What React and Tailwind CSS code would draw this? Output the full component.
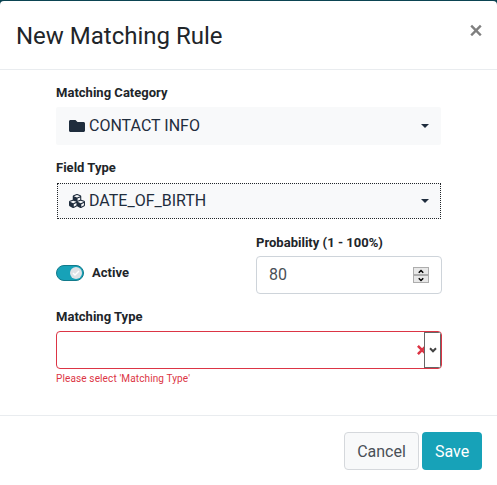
import React from 'react';
import { FaFolder, FaCubes } from 'react-icons/fa';

function Label({ children }) {
  return <div className="h-5 whitespace-nowrap text-[13px] leading-5 font-bold tracking-[0.02px] text-[#212529]">{children}</div>;
}

function Caret() {
  return <span className="ml-auto border-x-[4px] border-t-[4px] border-x-transparent border-t-[#1f2d3d]" />;
}

function Chevron({ up = false, className }) {
  return (
    <svg viewBox="0 0 8 6" className={className} fill="none" stroke="currentColor" strokeWidth="2">
      <path d={up ? 'M1 4.7 4 1.7l3 3' : 'M1 1.3l3 3 3-3'} />
    </svg>
  );
}

export default function App() {
  return (
    <div className="h-[485px] w-[497px] overflow-hidden bg-[#0b4452] pt-px font-['Roboto',sans-serif] text-[#212529]">
      <div className="flex h-[484px] flex-col rounded-t-[4px] bg-white">
        <header className="flex h-[69px] shrink-0 items-start justify-between border-b border-[#e9ecef] pr-[15px] pl-4">
          <h1 className="mt-[17px] text-2xl leading-9 font-normal">New Matching Rule</h1>
          <button aria-label="Close" className="mt-[23px] text-[#7f7f7f]">
            <svg viewBox="0 0 12 12" className="h-3 w-3" fill="none" stroke="currentColor" strokeWidth="2.4">
              <path d="M1.2 1.7l9.6 9.6M10.8 1.7 1.2 11.3" />
            </svg>
          </button>
        </header>

        <main className="h-[345px] shrink-0 pt-[13px] pr-[55px] pl-14">
          <Label>Matching Category</Label>
          <button className="mt-1 flex h-[38px] w-[385px] items-center rounded-[2px] bg-[#f8f9fa] pr-3 pl-[13px] text-base text-[#1f2d3d]">
            <FaFolder className="mr-1 h-4 w-4" />
            CONTACT INFO
            <Caret />
          </button>

          <div className="mt-[13px]">
            <Label>Field Type</Label>
          </div>
          <button className="mt-[5px] ml-px flex h-9 w-[384px] items-center border border-dotted border-[#212529] bg-[#f8f9fa] pr-[11px] pb-px pl-[11px] text-base text-[#1f2d3d]">
            <FaCubes className="mr-1 h-4 w-4" />
            DATE_OF_BIRTH
            <Caret />
          </button>

          <div className="mt-[14px] flex">
            <div className="flex h-[61px] w-[200px] items-start pt-[30px]">
              <span className="mt-[2px] flex h-4 w-7 items-center justify-end rounded-full border border-[#117a8b] bg-[#17a2b8] pr-px">
                <span className="flex h-3 w-3 items-center justify-center rounded-full bg-[#dee2e6]">
                  <svg viewBox="0 0 8 8" className="h-2 w-2" fill="none" stroke="white" strokeWidth="1.4">
                    <path d="m1 4 2 2 4-4" />
                  </svg>
                </span>
              </span>
              <span className="ml-2">
                <Label>Active</Label>
              </span>
            </div>
            <div>
              <Label>Probability (1 - 100%)</Label>
              <div className="mt-[3px] flex h-[38px] w-[186px] items-center rounded-[4px] border border-[#ced4da] px-3 text-base text-[#495057]">
                80
                <span className="ml-auto flex h-4 w-4 flex-col text-black">
                  <span className="flex h-2 items-center justify-center border border-[#adadad] bg-[#e8e8e8]">
                    <Chevron up className="h-[5px] w-[6px]" />
                  </span>
                  <span className="flex h-2 items-center justify-center border border-[#adadad] bg-[#e8e8e8]">
                    <Chevron className="h-[5px] w-[6px]" />
                  </span>
                </span>
              </div>
            </div>
          </div>

          <div className="mt-[13px]">
            <Label>Matching Type</Label>
          </div>
          <div className="mt-1 flex h-[38px] w-[386px] items-center justify-end overflow-hidden rounded-[4px] border border-[#dc3545]">
            <svg viewBox="0 0 7 10" className="h-[10px] w-[7px]" fill="none" stroke="#dc3545" strokeWidth="2.6">
              <path d="m.9.9 8.2 8.2M.9 9.1 9.1.9" />
            </svg>
            <span className="flex h-9 w-[17px] items-center justify-center border border-[#666] bg-white text-[#444]">
              <Chevron className="h-[6px] w-[8px]" />
            </span>
          </div>
          <div className="mt-[3px] text-[10px] leading-[14px] tracking-[0.13px] text-[#dc3545]">Please select 'Matching Type'</div>
        </main>

        <footer className="flex flex-1 items-start gap-[3px] border-t border-[#e9ecef] pt-4 pl-[344px] text-base">
          <button className="h-[38px] w-[75px] rounded-[4px] border border-[#d5d8dc] bg-[#f8f9fa] pt-px text-[#495057]">Cancel</button>
          <button className="h-[38px] w-[60px] rounded-[4px] bg-[#17a2b8] pt-px text-white">Save</button>
        </footer>
      </div>
    </div>
  );
}
